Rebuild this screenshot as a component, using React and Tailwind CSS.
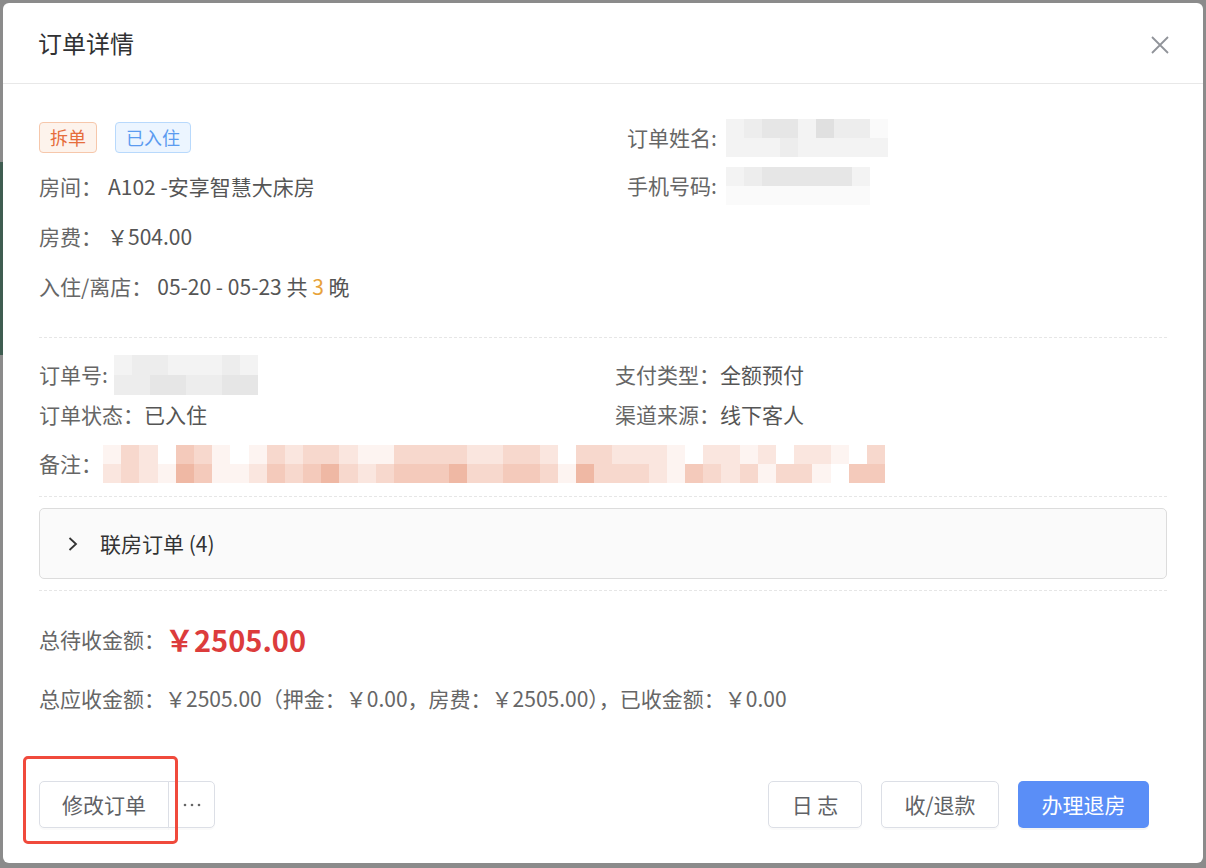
import React from "react";

const GRAY = ["bg-white", "bg-[#fafafa]", "bg-[#f3f3f3]", "bg-[#ededed]", "bg-[#e6e6e6]", "bg-[#e0e0e0]"];
const PEACH = ["bg-white", "bg-[#fdf4f1]", "bg-[#fae6df]", "bg-[#f7d8cd]", "bg-[#f4cabb]", "bg-[#efb8a4]"];

function Mosaic({ rows, palette, cell = "w-[18px]", rowH = "h-[19px]" }) {
  return (
    <div className="flex flex-col">
      {rows.map((r, i) => (
        <div key={i} className={`flex ${rowH}`}>
          {r.split("").map((d, j) => (
            <div key={j} className={`${cell} h-full ${palette[Number(d)]}`} />
          ))}
        </div>
      ))}
    </div>
  );
}

function Label({ children, className = "" }) {
  return <span className={`text-[#666] ${className}`}>{children}</span>;
}

export default function App() {
  return (
    <div className="relative flex h-[868px] w-[1206px] overflow-hidden bg-[#8b8b8b] font-['Noto_Sans_CJK_SC','Noto_Sans',sans-serif]">
      {/* page behind the overlay, visible along the left edge */}
      <div className="flex w-[3px] flex-col">
        <div className="h-[162px] bg-[#8b8b8b]" />
        <div className="h-[193px] bg-[#3f5d51]" />
        <div className="flex-1 bg-[#8b8b8b]" />
      </div>

      <div className="relative mt-[3px] flex h-[860px] w-[1200px] flex-col rounded-[6px] bg-white">
        {/* header */}
        <div className="flex h-[81px] items-center justify-between border-b border-[#e8e8e8] pl-[35px] pr-[33px]">
          <span className="text-[24px] text-[#303133]">订单详情</span>
          <svg width="20" height="20" viewBox="0 0 20 20" className="mt-[4px] text-[#909399]">
            <path d="M2 2 L18 18 M18 2 L2 18" stroke="currentColor" strokeWidth="1.8" fill="none" />
          </svg>
        </div>

        {/* body */}
        <div className="flex flex-col px-[36px] pt-[28px] text-[21px] text-[#555]">
          <div className="grid grid-cols-[588px_1fr]">
            <div className="flex flex-col">
              <div className="flex h-[50px] items-center gap-[18px]">
                <span className="flex h-[31px] items-center rounded-[4px] border border-[#f6c7ab] bg-[#fdf3ec] px-[10px] text-[18px] text-[#e66d3c]">拆单</span>
                <span className="flex h-[31px] items-center rounded-[4px] border border-[#b8d9fc] bg-[#ecf5ff] px-[10px] text-[18px] text-[#5b9bf0]">已入住</span>
              </div>
              <div className="flex h-[50px] items-center">
                <Label className="mr-[6px]">房间：</Label>
                <span>A102 -安享智慧大床房</span>
              </div>
              <div className="flex h-[50px] items-center">
                <Label className="mr-[5px]">房费：</Label>
                <span>￥504.00</span>
              </div>
              <div className="flex h-[50px] items-center">
                <Label className="mr-[5px]">入住/离店：</Label>
                <span>
                  05-20 - 05-23 共 <span className="text-[#e8a23a]">3</span> 晚
                </span>
              </div>
            </div>
            <div className="flex flex-col pt-[2px]">
              <div className="flex h-[48px] items-center">
                <Label className="mr-[9px]">订单姓名:</Label>
                <Mosaic palette={GRAY} rows={["234425331", "222322222"]} />
              </div>
              <div className="flex h-[48px] items-center">
                <Label className="mr-[9px]">手机号码:</Label>
                <Mosaic palette={GRAY} rows={["23444442", "11111111"]} />
              </div>
            </div>
          </div>

          <div className="mt-[25px] border-t border-dashed border-[#e6e6e6]" />

          <div className="grid grid-cols-[576px_1fr] pt-[17px]">
            <div className="flex flex-col">
              <div className="flex h-[40px] items-center">
                <Label className="mr-[6px]">订单号:</Label>
                <Mosaic palette={GRAY} rows={["23322232", "33443344"]} cell="w-[18px]" rowH="h-[20px]" />
              </div>
              <div className="flex h-[40px] items-center">
                <Label>订单状态：</Label>
                <span>已入住</span>
              </div>
            </div>
            <div className="flex flex-col">
              <div className="flex h-[40px] items-center">
                <Label>支付类型：</Label>
                <span>全额预付</span>
              </div>
              <div className="flex h-[40px] items-center">
                <Label>渠道来源：</Label>
                <span>线下客人</span>
              </div>
            </div>
          </div>
          <div className="mt-[9px] flex h-[40px] items-center">
            <Label className="mr-[1px]">备注：</Label>
            <Mosaic
              palette={PEACH}
              cell="w-[18.2px]"
              rows={[
                "1320431013233211333322332033222102212022103",
                "2321541124345323444533443153332143231331044",
              ]}
            />
          </div>

          <div className="mt-[12px] border-t border-dashed border-[#e6e6e6]" />

          {/* linked rooms collapse */}
          <div className="mt-[11px] flex h-[71px] items-center rounded-[5px] border border-[#dcdcdc] bg-[#fafafa] pl-[27px]">
            <svg width="12" height="16" viewBox="0 0 12 16" className="text-[#333]">
              <path d="M2.5 2 L9 8 L2.5 14" stroke="currentColor" strokeWidth="1.8" fill="none" />
            </svg>
            <span className="ml-[21px] text-[#333]">联房订单 (4)</span>
          </div>

          <div className="mt-[11px] border-t border-dashed border-[#e6e6e6]" />

          <div className="mt-[29px] flex h-[40px] items-center">
            <Label>总待收金额：</Label>
            <span className="text-[29px] font-bold text-[#dc3c3c]">￥2505.00</span>
          </div>
          <div className="mt-[19px] flex h-[40px] items-center">
            <Label>总应收金额：</Label>
            <span className="text-[#666]">￥2505.00（押金：￥0.00，房费：￥2505.00），已收金额：￥0.00</span>
          </div>
        </div>

        {/* footer */}
        <div className="mt-auto flex items-center justify-between pb-[35px] pl-[36px] pr-[54px] text-[21px]">
          <div className="flex">
            <button className="h-[47px] w-[130px] rounded-l-[5px] border border-[#dcdfe6] bg-white text-[#606266] shadow-[0_2px_0_rgba(0,0,0,0.02)]">修改订单</button>
            <div className="-ml-px flex h-[47px] w-[47px] items-center justify-center rounded-r-[5px] border border-[#dcdfe6] bg-white text-[#666] shadow-[0_2px_0_rgba(0,0,0,0.02)]">
              <svg width="18" height="4" viewBox="0 0 18 4">
                <circle cx="2" cy="2" r="1.3" fill="currentColor" />
                <circle cx="9" cy="2" r="1.3" fill="currentColor" />
                <circle cx="16" cy="2" r="1.3" fill="currentColor" />
              </svg>
            </div>
          </div>
          <div className="flex gap-[19px]">
            <button className="h-[47px] w-[94px] rounded-[5px] border border-[#dcdfe6] bg-white text-[#606266] shadow-[0_2px_0_rgba(0,0,0,0.02)]">日 志</button>
            <button className="h-[47px] w-[118px] rounded-[5px] border border-[#dcdfe6] bg-white text-[#606266] shadow-[0_2px_0_rgba(0,0,0,0.02)]">收/退款</button>
            <button className="h-[47px] w-[131px] rounded-[5px] bg-[#5a8ef7] text-white shadow-[0_2px_0_rgba(0,0,0,0.04)]">办理退房</button>
          </div>
        </div>

        {/* highlight frame around the edit button */}
        <div className="absolute left-[20px] top-[753px] h-[88px] w-[155px] rounded-[5px] border-[3px] border-[#f04a3c]" />
      </div>
    </div>
  );
}
